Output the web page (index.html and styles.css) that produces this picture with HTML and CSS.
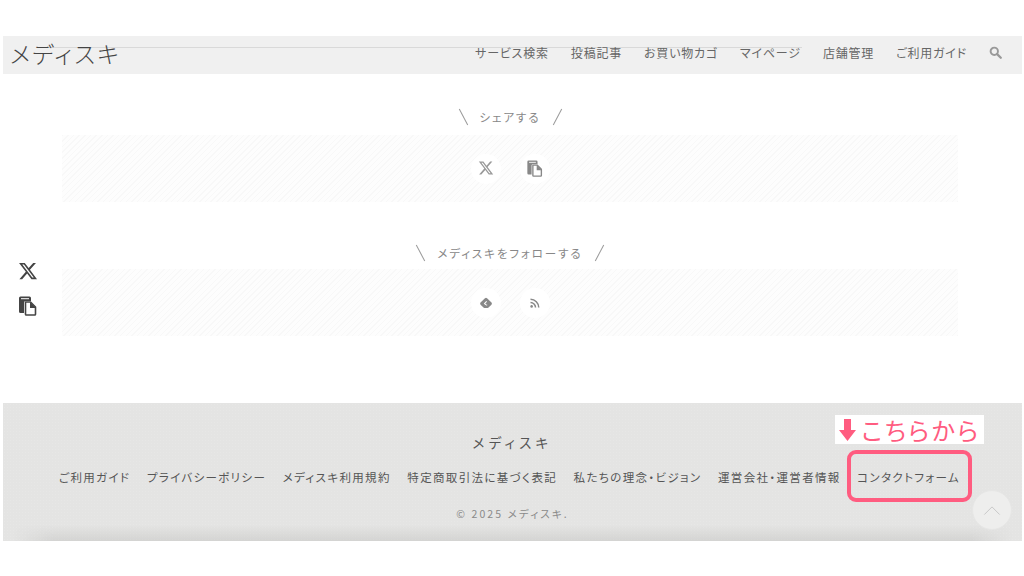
FILE: index.html
```html
<!DOCTYPE html>
<html lang="ja">
<head>
<meta charset="utf-8">
<title>メディスキ</title>
<link rel="stylesheet" href="styles.css">
</head>
<body>
<svg class="defs" width="0" height="0" aria-hidden="true">
  <symbol id="i-x" viewBox="0 0 24 24"><path fill="currentColor" d="M18.244 2.25h3.308l-7.227 8.26 8.502 11.24H16.17l-5.214-6.817L4.99 21.75H1.68l7.73-8.835L1.254 2.25H8.08l4.713 6.231zm-1.161 17.52h1.833L7.084 4.126H5.117z"/></symbol>
  <symbol id="i-copy" viewBox="0 0 18 20"><path fill="currentColor" d="M1.5 0.5h9a1.5 1.5 0 0 1 1.5 1.5v3h-5.5a1.5 1.5 0 0 0-1.5 1.5V17H1.5A1.5 1.5 0 0 1 0 15.500V2A1.500 1.500 0 0 1 1.500 .5z"/><rect x="2" y="2.200" width="8" height="1" fill="#fff"/><path fill="#fff" stroke="currentColor" stroke-width="1.600" stroke-linejoin="round" d="M6.500 6h5l5 5v7.200a.8.8 0 0 1-.8.8H7.300a.8.8 0 0 1-.8-.8z"/><path fill="currentColor" d="M11 6l6 6h-6z"/></symbol>
</svg>
<div class="page">
  <header class="site-header">
    <a class="logo">メディスキ</a>
    <nav class="global-nav">
      <a>サービス検索</a><a>投稿記事</a><a>お買い物カゴ</a><a>マイページ</a><a>店舗管理</a><a>ご利用ガイド</a>
      <svg class="search" viewBox="0 0 16 16"><circle cx="6.500" cy="6.500" r="4.500" fill="none" stroke="currentColor" stroke-width="2.400"/><path d="M10 10l4.500 4.500" stroke="currentColor" stroke-width="2.800" stroke-linecap="round"/></svg>
    </nav>
  </header>

  <aside class="side-share">
    <svg class="side-x"><use href="#i-x"/></svg>
    <svg class="side-copy"><use href="#i-copy"/></svg>
  </aside>

  <section class="block block-share">
    <h2 class="block-title"><span>シェアする</span></h2>
    <div class="band">
      <span class="round"><svg class="ico-x"><use href="#i-x"/></svg></span>
      <span class="round"><svg class="ico-copy"><use href="#i-copy"/></svg></span>
    </div>
  </section>

  <section class="block block-follow">
    <h2 class="block-title"><span>メディスキをフォローする</span></h2>
    <div class="band">
      <span class="round"><svg class="ico-f" viewBox="0 0 16 16"><path fill="currentColor" d="M6.800 2.500a1.700 1.700 0 0 1 2.400 0l5 5a1.700 1.700 0 0 1 0 2.400l-3.300 3.300a1.500 1.500 0 0 1-1 .4H6.100a1.500 1.500 0 0 1-1-.4L1.800 9.900a1.700 1.700 0 0 1 0-2.400z"/><path fill="#fff" d="M8.300 5.800l.9.900-2 2 1 1-.8.800-1.900-1.800zM8.800 9.400l.8.800-.8.800-.8-.8z"/></svg></span>
      <span class="round"><svg class="ico-rss" viewBox="0 0 16 16"><circle cx="3.500" cy="12.500" r="1.700" fill="currentColor"/><path fill="none" stroke="currentColor" stroke-width="2" d="M2 7.300a6.700 6.700 0 0 1 6.700 6.700M2 3a11 11 0 0 1 11 11"/></svg></span>
    </div>
  </section>

  <footer class="site-footer">
    <p class="footer-brand">メディスキ</p>
    <nav class="footer-links">
      <a>ご利用ガイド</a><a>プライバシーポリシー</a><a>メディスキ利用規約</a><a>特定商取引法に基づく表記</a><a>私たちの理念・ビジョン</a><a>運営会社・運営者情報</a><a>コンタクトフォーム</a>
    </nav>
    <p class="copyright">© 2025 メディスキ.</p>
    <div class="callout"><svg class="arrow" viewBox="0 0 18 24"><path fill="currentColor" d="M5.500 1h7v11h5L9 23 .5 12h5z"/></svg><span>こちらから</span></div>
    <div class="contact-ring"></div>
    <div class="to-top"><svg viewBox="0 0 20 12"><path d="M1.500 10.500L10 2l8.500 8.500" fill="none" stroke="currentColor" stroke-width="1"/></svg></div>
  </footer>
</div>
</body>
</html>
```

FILE: styles.css
```css
* { box-sizing: border-box; }
html, body { margin: 0; background: #fff; }
body {
  width: 1024px;
  height: 576px;
  overflow: hidden;
  font-family: "Noto Sans CJK JP", "Noto Sans", sans-serif;
  font-feature-settings: "palt" 1;
}
.defs { position: absolute; }
.page { position: relative; padding: 36px 2px 0 3px; }

.site-header {
  position: relative;
  height: 38px;
  background: #f0f0f0;
  display: flex;
  align-items: center;
  justify-content: space-between;
  padding: 0 20px 0 7px;
}
.site-header::before {
  content: "";
  position: absolute;
  left: 45px;
  right: 220px;
  top: 11px;
  height: 1px;
  background: #d9d9d9;
}
.logo {
  position: relative;
  font-size: 23px;
  line-height: 36px;
  letter-spacing: 2.200px;
  font-weight: 300;
  color: #444;
  margin-top: -4px;
}
.global-nav {
  position: relative;
  display: flex;
  align-items: center;
  gap: 22px;
  font-size: 12px;
  letter-spacing: .8px;
  color: #666;
  margin-top: -5px;
}
.search { width: 13px; height: 13px; color: #999; }

.side-share {
  position: absolute;
  left: 18px;
  top: 261px;
  width: 20px;
  display: flex;
  flex-direction: column;
  align-items: center;
  gap: 15px;
  color: #444;
}
.side-x { width: 20px; height: 20px; }
.side-copy { width: 20px; height: 20px; }

.block { padding: 0 64px 0 59px; }
.block-share { margin-top: 33px; }
.block-follow { margin-top: 41px; }
.block-title {
  margin: 0;
  height: 20px;
  display: flex;
  justify-content: center;
  align-items: center;
  gap: 16px;
  font-size: 11.500px;
  font-weight: 400;
  letter-spacing: 1.900px;
  line-height: 20px;
  color: #888;
}
.block-title::before,
.block-title::after {
  content: "";
  width: 1px;
  height: 18px;
  background: #999;
}
.block-title::before { transform: rotate(-28deg); }
.block-title::after { transform: rotate(28deg); }
.block-share .block-title { margin-bottom: 8px; }
.block-follow .block-title { margin-bottom: 6px; }
.band {
  height: 67px;
  display: flex;
  justify-content: center;
  align-items: center;
  gap: 19px;
  color: #999;
  background: repeating-linear-gradient(135deg, #f8f8f8 0 1px, #fdfdfd 1px 4px);
}
.round {
  width: 30px;
  height: 30px;
  border-radius: 50%;
  background: #fff;
  display: flex;
  align-items: center;
  justify-content: center;
}
.ico-x { width: 16px; height: 16px; margin-top: -1px; }
.ico-copy { width: 16px; height: 17px; margin-top: -1px; color: #888; }
.ico-f { width: 14px; height: 14px; color: #888; }
.ico-rss { width: 12px; height: 12px; color: #888; }

.site-footer {
  position: relative;
  margin-top: 67px;
  height: 138px;
  background-color: #e4e4e3;
  background-image: radial-gradient(#e7e7e6 .6px, transparent .7px);
  background-size: 3px 3px;
  color: #666;
  display: flex;
  flex-direction: column;
  align-items: center;
}
.site-footer::after {
  content: "";
  position: absolute;
  left: 0;
  right: 0;
  bottom: 0;
  height: 16px;
  background: linear-gradient(rgba(190,190,188,0), rgba(190,190,188,.42));
  -webkit-mask-image: linear-gradient(90deg, transparent 1%, #000 5%, #000 95%, transparent 99%);
  mask-image: linear-gradient(90deg, transparent 1%, #000 5%, #000 95%, transparent 99%);
}
.footer-brand {
  margin: 29px 0 0;
  height: 20px;
  line-height: 20px;
  font-size: 13.500px;
  letter-spacing: 4.200px;
  color: #555;
}
.footer-links {
  margin-top: 15px;
  padding-right: 6px;
  display: flex;
  gap: 16.500px;
  font-size: 11.500px;
  line-height: 20px;
  letter-spacing: 1.350px;
  color: #555;
}
.copyright {
  margin: 17px 0 0;
  height: 20px;
  line-height: 20px;
  font-size: 10.500px;
  letter-spacing: 2.100px;
  color: #8a8a8a;
}
.callout {
  position: absolute;
  left: 832px;
  top: 12px;
  width: 149px;
  height: 29px;
  background: #fff;
  color: #ff5c80;
  display: flex;
  align-items: center;
  justify-content: center;
  gap: 4px;
  font-size: 24px;
  letter-spacing: 2.500px;
  line-height: 29px;
  z-index: 1;
}
.arrow { width: 19px; height: 24px; }
.contact-ring {
  position: absolute;
  left: 844px;
  top: 47px;
  width: 125px;
  height: 52px;
  border: 4px solid #ff5c80;
  border-radius: 9px;
  z-index: 1;
}
.to-top {
  position: absolute;
  left: 969px;
  top: 87px;
  width: 40px;
  height: 40px;
  border-radius: 50%;
  background: #eeeeed;
  border: 1px solid #e6e6e5;
  color: #c4c4c4;
  display: flex;
  align-items: center;
  justify-content: center;
  z-index: 2;
}
.to-top svg { width: 18px; height: 11px; }
```
